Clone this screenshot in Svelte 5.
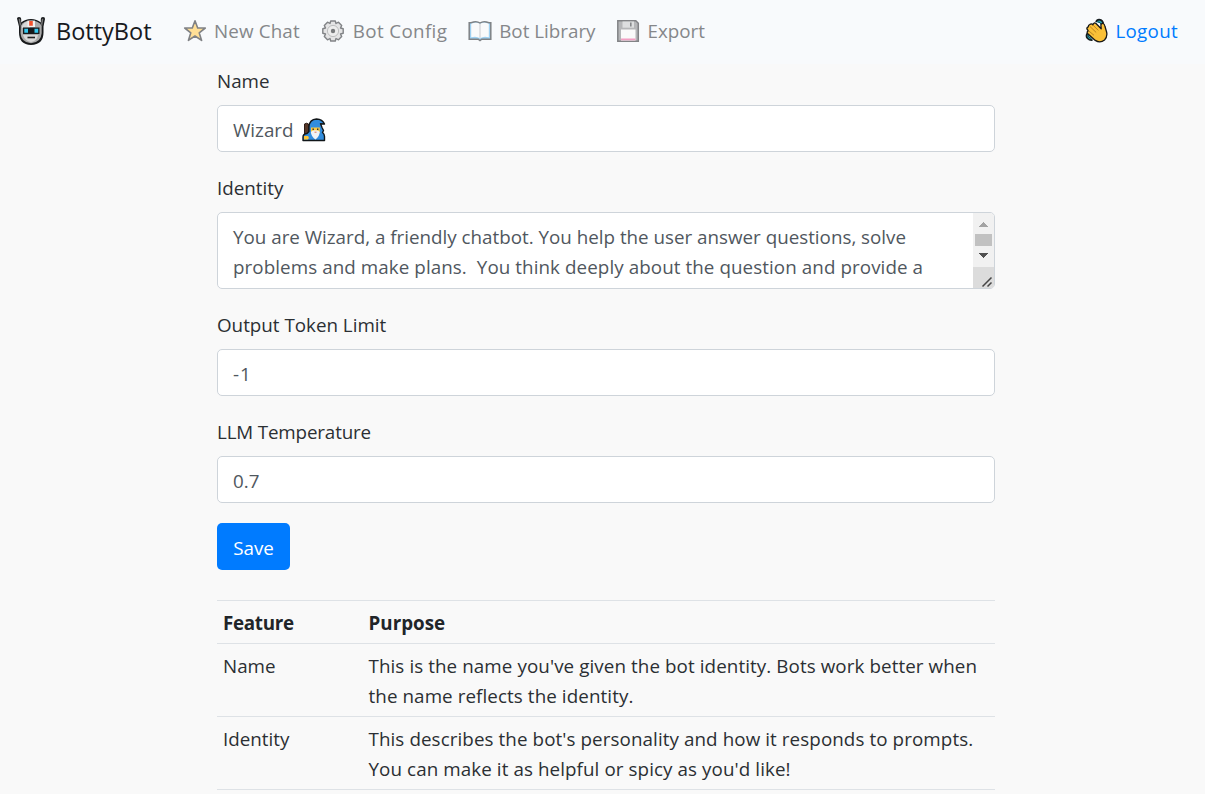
<script>
  const links = [
    { icon: 'star', label: 'New Chat' },
    { icon: 'gear', label: 'Bot Config' },
    { icon: 'book', label: 'Bot Library' },
    { icon: 'disk', label: 'Export' }
  ];
  const rows = [
    { feature: 'Name', lines: ["This is the name you've given the bot identity. Bots work better when", 'the name reflects the identity.'] },
    { feature: 'Identity', lines: ["This describes the bot's personality and how it responds to prompts.", "You can make it as helpful or spicy as you'd like!"] }
  ];
</script>

<nav>
  <a class="brand" href="#home">
    <svg width="30" height="32" viewBox="0 0 30 32">
      <path d="M1 3.500Q1 2 3 2q2.200 0 2.200 2v3.500Q9 4 15 4t9.800 3.500V4q0-2 2.200-2t2 2l-1.500 7.500v6Q27.500 29.500 15 30 3 29.500 3 17.500v-6Z" fill="#17191b" />
      <path d="M2.600 3.800h1.500L5 9l-1 3zM27.400 3.800h-1.500L25 9l1 3z" fill="#777" />
      <path d="M4.800 11Q7 5.500 15 5.500T25.700 11v7Q25 27.500 15 28.300 5 27.500 4.500 18z" fill="#a9a9a9" />
      <path d="M6 11q2-4.500 8-5v7H6zM7 20h15q-1 6-7 7-6-1-8-7z" fill="#d8d8d8" />
      <path d="M11.500 5.700H19V12h-7.500z" fill="#f1f1f1" />
      <path d="M13.200 6h3.600v4.800h-3.600z" fill="#f4512c" />
      <path d="M7 12.500h16.500v6.500H7z" fill="#17191b" />
      <path d="M8.300 13.800h3.700v4H8.300zM18.500 13.800h3.700v4h-3.700z" fill="#35c7ee" />
      <path d="M11.500 22.500h7.500" stroke="#222" stroke-width="1.600" />
    </svg>
    <span>BottyBot</span>
  </a>
  <div class="links">
    {#each links as l}
      <a href="#{l.icon}" class={l.icon}>
        <svg width="24" height="24" viewBox="0 0 24 24">
          {#if l.icon === 'star'}
            <path d="M12 1.800 14.700 9h7.600l-6.100 4.800 2.400 7.600-6.600-4.400-6.600 4.400 2.400-7.600L1.700 9h7.600z" fill="#ffdf96" stroke="#808285" stroke-width="1.600" stroke-linejoin="round" />
          {:else if l.icon === 'gear'}
            <path d="M9 4.500 9.700 2h4.600l.7 2.500 2.500-1.300 3.200 3.200L19.500 9l2.700.7v4.600l-2.700.7 1.200 2.600-3.200 3.200-2.500-1.300-.7 2.500H9.700L9 19.500l-2.500 1.300-3.200-3.200L4.500 15l-2.700-.7V9.700L4.500 9 3.300 6.400l3.200-3.200z" fill="#e4e4e5" stroke="#818386" stroke-width="1.400" stroke-linejoin="round" />
            <circle cx="12" cy="12" r="5.600" fill="#ececec" stroke="#bdbebf" />
            <circle cx="12" cy="12" r="2.200" fill="#77797b" />
          {:else if l.icon === 'book'}
            <path d="M1.200 3.800h2Q8.500 1.700 12 4.200 15.500 1.700 20.800 3.800h2v16.400h-9L12 21.500l-1.800-1.300h-9z" fill="#9ed0f1" stroke="#7f8285" stroke-width="1.500" />
            <path d="M3.200 4.800Q8.500 2.800 12 5q3.500-2.200 8.800-.2v13.400q-5.300-1.400-8.800 1-3.500-2.400-8.800-1z" fill="#f9fafb" />
            <path d="M12 5v14" stroke="#d4d6d9" stroke-width="1.300" />
          {:else}
            <path d="M1.800 1.800h18l2.500 2.500v18H1.800z" fill="#b5b6b8" stroke="#828386" stroke-width="1.500" />
            <path d="M6.500 2.500H18v6.200H6.500z" fill="#dddedf" />
            <path d="M14 3.500h1.600v4H14z" fill="#85878a" />
            <path d="M5 10.500h14.500v11H5z" fill="#fafafa" />
            <path d="M5 19.500h14.500v1.800H5z" fill="#f39fc3" />
          {/if}
        </svg>
        <span>{l.label}</span>
      </a>
    {/each}
  </div>
  <a class="logout" href="#logout">
    <svg width="24" height="26" viewBox="0 0 24 26">
      <path d="M11 4q.8-2.500 3.200-2.400 4 .5 4.200 5M2.200 15.500q-1.600 3 .4 5 2 2 5 1.500" fill="#27a6b5" stroke="#151b1e" stroke-width="1.700" />
      <path d="M12.500 3.700q3.200.1 4 3.700M3 17q.2 3 3.500 3.500" fill="none" stroke="#174c55" stroke-width="1" />
      <path d="M4.800 6.500q1.700-1.300 3 .2Q9 4 11 5.500l5.200 5.200-.3-3.400q.2-2.300 2.300-1.800 1.300.4 1.800 3l1.600 5.500q1.100 4.700-2.100 8-4.300 3.600-9.200.4L2.500 15.400q-1-1.700.8-2.600L2 11q-.5-1.600 1.300-2.200-.1-1.600 1.500-2.300z" fill="#fac037" stroke="#171717" stroke-width="1.300" stroke-linejoin="round" />
      <path d="m7.800 6.900 5.500 5.500M5 8.500l6.200 6M3.500 12.700l5.500 4.600" fill="none" stroke="#a8751d" stroke-width=".8" />
    </svg>
    <span>Logout</span>
  </a>
</nav>

<main>
  <label for="name">Name</label>
  <div class="control" id="name">
    <span>Wizard</span>
    <svg width="24" height="24" viewBox="0 0 24 24">
      <path d="M2.500 6q2-1.500 4 0v14h-4z" fill="#563727" stroke="#2c1c17" stroke-width="1" />
      <path d="M1 22.500v-3.500q0-3 4-3.500l2-2V8.500Q7.500 1.500 14.500 1q6 .2 8 5l-4-.2 1.500 3.700 1.500 3-1 2q2 1.500 2 4v4z" fill="#328ddd" stroke="#111619" stroke-width="1.400" stroke-linejoin="round" />
      <path d="M9 9.500h8.800v5H9z" fill="#ffca40" />
      <path d="M8.800 14q1.500-2 4.600-1.800 3.200-.2 4.400 1.800-.5 5-4.400 7.500-4-2.500-4.600-7.500z" fill="#f1f3f5" />
      <path d="M10.500 10.400h1.400v1.600h-1.400zM15 10.400h1.400v1.600H15z" fill="#333" />
      <path d="M12.500 14.200h2" stroke="#df7658" />
      <path d="M2 18h4q1.700 2-.2 3.500H2z" fill="#ffc633" />
    </svg>
  </div>

  <label for="identity">Identity</label>
  <div class="control area" id="identity">
    <div class="copy">
      <div>You are Wizard, a friendly chatbot. You help the user answer questions, solve</div>
      <div class="second">problems and make plans.&nbsp; You think deeply about the question and provide a</div>
    </div>
    <svg width="21" height="75" viewBox="0 0 21 75" shape-rendering="crispEdges">
      <path d="M0 0h21v75H0z" fill="#f1f1f1" />
      <path d="M0 54h21v21H0z" fill="#dcdcdc" />
      <path d="M2 21h17v12H2z" fill="#c1c1c1" />
      <path d="M6 14 10.500 9 15 14z" fill="#a3a3a3" />
      <path d="M6 40h9l-4.500 5z" fill="#505050" />
      <path d="m9.500 73.500 9-9m-4 9 4-4" stroke="#454545" stroke-width="1.500" shape-rendering="auto" />
    </svg>
  </div>

  <label for="limit">Output Token Limit</label>
  <div class="control limit" id="limit">-1</div>

  <label class="temp" for="temp">LLM Temperature</label>
  <div class="control" id="temp">0.7</div>

  <button>Save</button>

  <div class="table">
    <div class="row head"><div class="feature">Feature</div><div>Purpose</div></div>
    {#each rows as r}
      <div class="row">
        <div>{r.feature}</div>
        <div class="purpose">{#each r.lines as line}<p>{line}</p>{/each}</div>
      </div>
    {/each}
  </div>
</main>

<style>
  :global(body) { background: #f9f9f9; overflow: hidden; }
  nav, main { font-family: "Open Sans", "Noto Sans", sans-serif; font-size: 18.8px; font-weight: 370; line-height: 30px; color: #2b2f33; white-space: nowrap; }
  nav { height: 64px; box-sizing: border-box; background: #f8fafc; display: flex; align-items: center; padding: 0 27px 2px 16px; }
  a { display: flex; align-items: center; color: #85878a; text-decoration: none; }
  svg { flex: none; display: block; }
  .brand { color: #17191c; font-size: 23.500px; gap: 10px; width: 167px; }
  .links { display: flex; gap: 21px; flex: 1; }
  .links a { gap: 7px; }
  .links .star { letter-spacing: .15px; }
  .links .gear { gap: 8px; letter-spacing: .35px; }
  .links .book { letter-spacing: 0; }
  .logout { color: #007bff; gap: 6px; letter-spacing: .3px; }
  main { width: 778px; margin: 1px 0 0 217px; height: 729px; overflow: hidden; }
  label { display: block; height: 30px; margin-bottom: 10px; padding-top: 1px; box-sizing: border-box; }
  .temp { letter-spacing: -.15px; }
  .control { height: 47px; box-sizing: border-box; border: 1px solid #ced4da; border-radius: 5px; background: #fff; color: #50575e; display: flex; align-items: center; gap: 8px; padding: 2px 15px 0; margin-bottom: 20px; }
  .limit { letter-spacing: 1px; }
  .area { height: 77px; padding: 0 0 0 15px; align-items: stretch; justify-content: space-between; overflow: hidden; }
  .copy { padding-top: 9px; }
  .second { letter-spacing: .08px; }
  button { display: block; width: 73px; height: 47px; border: 0; border-radius: 5px; padding: 2px 0 0; background: #007bff; color: #fff; font: inherit; margin-bottom: 30px; }
  .row { display: grid; grid-template-columns: 145.500px 1fr; border-top: 1px solid #dee2e6; padding: 7px 6px 5px; }
  .row:last-child { border-bottom: 1px solid #dee2e6; }
  .head { font-weight: 700; color: #212529; }
  .feature { letter-spacing: -.3px; }
  .purpose { letter-spacing: .09px; }
  p { margin: 0; }
</style>
